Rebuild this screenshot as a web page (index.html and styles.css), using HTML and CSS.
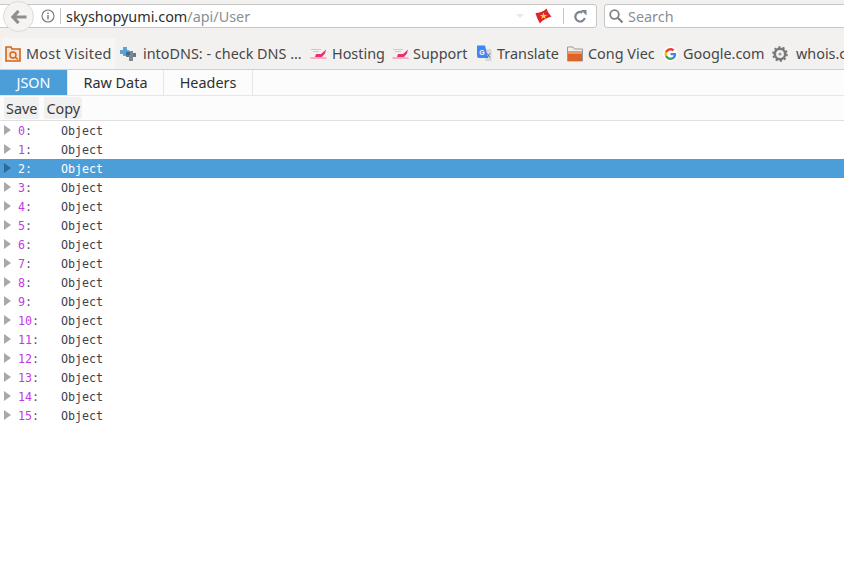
FILE: index.html
```html
<!DOCTYPE html>
<html lang="en">
<head>
<meta charset="utf-8">
<title>skyshopyumi.com/api/User</title>
<link rel="stylesheet" href="styles.css">
</head>
<body>
<header class="chrome">
  <div class="navbar">
    <div class="urlbar">
      <svg class="info" width="14" height="14" viewBox="0 0 14 14"><circle cx="7" cy="7" r="6" fill="none" stroke="#777" stroke-width="1.1"/><rect x="6.300" y="6" width="1.400" height="4.400" fill="#777"/><rect x="6.300" y="3.500" width="1.400" height="1.500" fill="#777"/></svg>
      <span class="vsep"></span>
      <span class="url">skyshopyumi.com<span class="url-path">/api/User</span></span>
      <span class="drop"></span>
      <svg class="flag" width="17" height="16" viewBox="0 0 17 16"><path d="M0.500 5 C4 5 8 4 11.500 0.500 C12.500 3.500 14.500 6.500 16.500 8.500 C13 10 8 11 5 15.500 C3 12.500 1.500 8.500 0.500 5Z" fill="#e0242b"/><path d="M8.500 4.500 L9.400 7 L12 7 L10 8.500 L10.800 11 L8.500 9.500 L6.300 11 L7 8.500 L5 7 L7.600 7Z" fill="#f6d93a"/></svg>
      <span class="vsep vsep-r"></span>
      <svg class="reload" width="13" height="14" viewBox="0 0 13 14"><path d="M10.800 9 A4.800 4.800 0 1 1 8.500 3.500" fill="none" stroke="#7a8590" stroke-width="2.200"/><path d="M7 1 L12.500 1 L12.500 6.500Z" fill="#7a8590"/></svg>
    </div>
    <div class="searchbar">
      <svg width="16" height="16" viewBox="0 0 16 16"><circle cx="6.500" cy="6.500" r="4.300" fill="none" stroke="#808080" stroke-width="1.800"/><path d="M9.800 9.800 L14.500 14.500" stroke="#808080" stroke-width="2.200"/></svg>
      <span class="search-text">Search</span>
    </div>
    <div class="back">
      <svg width="16" height="14" viewBox="0 0 16 14"><path d="M7.500 1 L2 7 L7.500 13 M3 7 H15.500" fill="none" stroke="#8f8f8f" stroke-width="3.200"/></svg>
    </div>
  </div>
  <nav class="bookmarks">
    <div class="bm bm-most">
      <svg width="16" height="16" viewBox="0 0 16 16"><path d="M1 1 H6 L7 3 H15 V15 H1Z" fill="#f6e4d2" stroke="#d0651c" stroke-width="1.600"/><circle cx="8" cy="9" r="3" fill="none" stroke="#d0651c" stroke-width="1.400"/><path d="M10 11 L13 13.500" stroke="#d0651c" stroke-width="1.500"/></svg>
      <span>Most Visited</span>
    </div>
    <div class="bm bm-dns">
      <svg width="17" height="16" viewBox="0 0 17 16"><rect x="0" y="4" width="9" height="4" fill="#5aa3d6"/><rect x="3" y="1" width="4" height="9" fill="#5aa3d6"/><rect x="6" y="7" width="10" height="4" fill="#6b7784"/><rect x="9" y="5" width="4" height="10" fill="#7d8894"/><rect x="6" y="6" width="4" height="3" fill="#3f6c92"/></svg>
      <span>intoDNS: - check DNS ...</span>
    </div>
    <div class="bm bm-host">
      <svg width="17" height="16" viewBox="0 0 17 16"><path d="M1 3.500 H11 M3 5.500 H9" stroke="#f7b5cc" stroke-width="1.200"/><path d="M6 8 L11 8 L16 3.500 L15 7.500 L12 11 H5Z" fill="#ec2f70"/><path d="M0.500 12 H16.500" stroke="#f49ab9" stroke-width="1.500"/></svg>
      <span>Hosting</span>
    </div>
    <div class="bm bm-support">
      <svg width="17" height="16" viewBox="0 0 17 16"><path d="M1 3.500 H11 M3 5.500 H9" stroke="#f7b5cc" stroke-width="1.200"/><path d="M6 8 L11 8 L16 3.500 L15 7.500 L12 11 H5Z" fill="#ec2f70"/><path d="M0.500 12 H16.500" stroke="#f49ab9" stroke-width="1.500"/></svg>
      <span>Support</span>
    </div>
    <div class="bm bm-translate">
      <svg width="16" height="17" viewBox="0 0 16 17"><path d="M8 4 H15.500 V16 H9.500Z" fill="#d5d8dc"/><path d="M1 0.500 H9 L12 13 H3 a2 2 0 0 1-2-2Z" fill="#4285f4"/><text x="3.300" y="9.500" class="gl">G</text><path d="M11 8.500 L14 12.500 M14 8.500 L11 12.500" stroke="#667" stroke-width="1"/></svg>
      <span>Translate</span>
    </div>
    <div class="bm bm-cong">
      <svg width="16" height="16" viewBox="0 0 16 16"><path d="M0.500 15 V1 H6 L7.500 3 H15.500 V15Z" fill="#eee" stroke="#999"/><rect x="1" y="5" width="14" height="10" fill="#d9652a"/><rect x="1" y="5" width="14" height="3" fill="#eb9a68"/></svg>
      <span>Cong Viec</span>
    </div>
    <div class="bm bm-google">
      <svg width="15" height="16" viewBox="-5 -6 58 60"><circle cx="24" cy="24" r="29" fill="#fff"/><path fill="#4285F4" d="M46 24.500c0-1.600-.1-3.100-.4-4.500H24v9h12.400c-.5 2.900-2.100 5.300-4.500 6.900v5.700h7.300C43.500 37.700 46 31.700 46 24.500z"/><path fill="#34A853" d="M24 47c6.200 0 11.400-2 15.200-5.500l-7.300-5.700c-2 1.400-4.700 2.200-7.900 2.200-6 0-11.100-4.100-12.900-9.500H3.500v5.900C7.300 41.900 15 47 24 47z"/><path fill="#FBBC05" d="M11.100 28.500c-.5-1.400-.7-2.900-.7-4.500s.3-3.100.7-4.500v-5.900H3.500C2 16.700 1 20.200 1 24s1 7.300 2.500 10.400l7.600-5.900z"/><path fill="#EA4335" d="M24 10c3.400 0 6.400 1.200 8.800 3.400l6.500-6.500C35.400 3.300 30.200 1 24 1 15 1 7.300 6.100 3.500 13.600l7.600 5.900C12.900 14.100 18 10 24 10z"/></svg>
      <span>Google.com</span>
    </div>
    <div class="bm bm-whois">
      <svg width="16" height="16" viewBox="0 0 16 16"><circle cx="8" cy="8" r="5.200" fill="none" stroke="#77797b" stroke-width="2.600"/><circle cx="8" cy="8" r="6.800" fill="none" stroke="#77797b" stroke-width="2" stroke-dasharray="2.200 2.100"/><circle cx="8" cy="8" r="1.600" fill="#9a9c9e"/></svg>
      <span>whois.com</span>
    </div>
  </nav>
</header>
<main class="viewer">
  <div class="tabs">
    <div class="tab tab-json">JSON</div>
    <div class="tab tab-raw">Raw Data</div>
    <div class="tab tab-headers">Headers</div>
  </div>
  <div class="actions">
    <button class="btn btn-save">Save</button>
    <button class="btn btn-copy">Copy</button>
  </div>
  <div class="tree">
    <div class="row"><span class="twisty"></span><span class="key">0<i>:</i></span><span class="val">Object</span></div>
    <div class="row"><span class="twisty"></span><span class="key">1<i>:</i></span><span class="val">Object</span></div>
    <div class="row selected"><span class="twisty"></span><span class="key">2<i>:</i></span><span class="val">Object</span></div>
    <div class="row"><span class="twisty"></span><span class="key">3<i>:</i></span><span class="val">Object</span></div>
    <div class="row"><span class="twisty"></span><span class="key">4<i>:</i></span><span class="val">Object</span></div>
    <div class="row"><span class="twisty"></span><span class="key">5<i>:</i></span><span class="val">Object</span></div>
    <div class="row"><span class="twisty"></span><span class="key">6<i>:</i></span><span class="val">Object</span></div>
    <div class="row"><span class="twisty"></span><span class="key">7<i>:</i></span><span class="val">Object</span></div>
    <div class="row"><span class="twisty"></span><span class="key">8<i>:</i></span><span class="val">Object</span></div>
    <div class="row"><span class="twisty"></span><span class="key">9<i>:</i></span><span class="val">Object</span></div>
    <div class="row"><span class="twisty"></span><span class="key">10<i>:</i></span><span class="val">Object</span></div>
    <div class="row"><span class="twisty"></span><span class="key">11<i>:</i></span><span class="val">Object</span></div>
    <div class="row"><span class="twisty"></span><span class="key">12<i>:</i></span><span class="val">Object</span></div>
    <div class="row"><span class="twisty"></span><span class="key">13<i>:</i></span><span class="val">Object</span></div>
    <div class="row"><span class="twisty"></span><span class="key">14<i>:</i></span><span class="val">Object</span></div>
    <div class="row"><span class="twisty"></span><span class="key">15<i>:</i></span><span class="val">Object</span></div>
  </div>
</main>
</body>
</html>
```

FILE: styles.css
```css
* { box-sizing: border-box; }
html, body { margin: 0; padding: 0; height: 100%; overflow: hidden; background: #fff; }
body { font-family: "Noto Sans", "Open Sans", sans-serif; color: #3d3d3d; }

.chrome { height: 70px; background: #f3f1f0; border-bottom: 1px solid #d2d0cf; display: flex; flex-direction: column; overflow: hidden; }
.navbar { height: 34px; position: relative; display: flex; padding-top: 4px; gap: 7px; }
.urlbar { width: 598px; height: 24px; margin-left: -1px; background: #fff; border: 1px solid #c6c6c6; border-radius: 0 3px 3px 0; display: flex; align-items: center; padding-left: 40px; flex: none; }
.info { flex: none; margin-left: 1px; }
.vsep { width: 1px; height: 16px; background: #c4c4c4; margin-left: 5px; flex: none; }
.url { font-size: 14.4px; color: #2e2e2e; margin-left: 5px; white-space: nowrap; }
.url-path { color: #8a8f94; }
.drop { margin-left: auto; width: 0; height: 0; border-left: 4px solid transparent; border-right: 4px solid transparent; border-top: 4px solid #e8e8e8; }
.flag { margin-left: 11px; flex: none; }
.vsep-r { margin-left: 11px; }
.reload { margin-left: 10px; margin-right: 9px; flex: none; }
.searchbar { width: 260px; height: 24px; background: #fff; border: 1px solid #c6c6c6; border-radius: 3px 0 0 3px; display: flex; align-items: center; padding-left: 3px; gap: 4px; flex: none; }
.search-text { font-size: 14.4px; color: #8a8f94; }
.back { position: absolute; left: 3px; top: 1px; width: 31px; height: 31px; border-radius: 50%; background: #f5f4f3; border: 1px solid #dcdbda; display: flex; align-items: center; justify-content: center; }

.bookmarks { height: 35px; display: flex; align-items: center; padding-left: 2px; padding-top: 4px; white-space: nowrap; }
.bm { display: flex; align-items: center; font-size: 14.4px; color: #474747; flex: none; overflow: hidden; }
.bm svg { flex: none; }
.gl { font: bold 7px "Liberation Sans", sans-serif; fill: #fff; }
.bm-most { width: 113px; margin-right: 5px; padding-left: 3px; gap: 5px; align-self: stretch; background: #f7f6f5; letter-spacing: 0.25px; }
.bm-dns { width: 190px; gap: 6px; }
.bm-host { width: 82px; gap: 5px; }
.bm-support { width: 84px; gap: 4px; }
.bm-translate { width: 91px; gap: 5px; }
.bm-cong { width: 96px; gap: 5px; }
.bm-google { width: 109px; gap: 5px; }
.bm-whois { width: 90px; gap: 8px; }

.tabs { height: 26px; display: flex; background: #fcfcfc; border-bottom: 1px solid #e6e6e6; }
.tab { font-size: 14.4px; line-height: 25px; text-align: center; color: #2f2f2f; border-right: 1px solid #e6e6e6; }
.tab-json { width: 68px; background: #4c9ed9; color: #fff; }
.tab-raw { width: 96px; }
.tab-headers { width: 89px; }

.actions { height: 25px; display: flex; align-items: center; gap: 5px; padding: 0 4px; background: #fcfcfc; border-bottom: 1px solid #e0e0e0; }
.btn { height: 22px; padding: 0 2px; border: 0; border-radius: 2px; background: #f0f0f0; font: 14.4px "Noto Sans", "Open Sans", sans-serif; color: #3a3a3a; }

.tree { font-family: "DejaVu Sans Mono", monospace; font-size: 11.67px; }
.row { height: 19px; display: flex; align-items: center; color: #39424e; }
.twisty { width: 0; height: 0; margin-left: 4px; margin-top: -1px; border-top: 5px solid transparent; border-bottom: 5px solid transparent; border-left: 7px solid #a9a9a9; flex: none; }
.key { width: 43px; margin-left: 7px; color: #c339e6; flex: none; }
.key i { font-style: normal; color: #4a5560; }
.selected { background: #4c9ed9; color: #fff; }
.selected .key, .selected .key i { color: #fff; }
.selected .twisty { border-left-color: #2c6a97; }
```
